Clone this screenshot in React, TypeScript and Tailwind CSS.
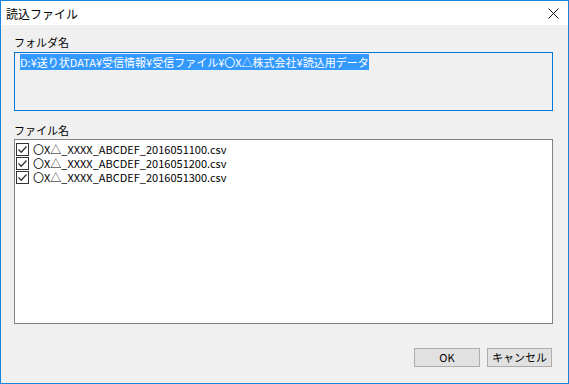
import React from 'react';

const files = [
  '〇X△_XXXX_ABCDEF_2016051100.csv',
  '〇X△_XXXX_ABCDEF_2016051200.csv',
  '〇X△_XXXX_ABCDEF_2016051300.csv',
];

const font = { fontFamily: '"Noto Sans CJK JP", "Noto Sans", sans-serif' };

const CheckBox = () => (
  <div className="w-[13px] h-[13px] border border-[#333333] bg-white flex items-center justify-center shrink-0">
    <svg width="11" height="11" viewBox="0 0 11 11">
      <path d="M1.5 5.5 L4.2 8.2 L9.5 2.5" stroke="#333333" strokeWidth="1.3" fill="none" />
    </svg>
  </div>
);

const App = () => {
  return (
    <div
      className="w-[569px] h-[384px] border border-[#1883d7] flex flex-col text-black text-[11px] leading-[13px]"
      style={font}
    >
      {/* title bar */}
      <div className="h-[24px] bg-white flex items-center justify-between pl-[5px] pr-[9px] shrink-0">
        <span className="text-[12px]">読込ファイル</span>
        <svg width="11" height="11" viewBox="0 0 11 11">
          <path d="M0.5 0.5 L10.5 10.5 M10.5 0.5 L0.5 10.5" stroke="#111" strokeWidth="1" />
        </svg>
      </div>

      <div className="flex-1 bg-[#f0f0f0] pl-[13px] pr-[15px] pt-[11px] flex flex-col">
        <div className="mb-[3px]">フォルダ名</div>
        <div className="h-[59px] border border-[#0078d7] bg-[#f0f0f0] pl-[5px] pt-[3px]">
          <span className="bg-[#3399ff] text-white">D:¥送り状DATA¥受信情報¥受信ファイル¥〇X△株式会社¥読込用データ</span>
        </div>

        <div className="mt-[13px] mb-[2px]">ファイル名</div>
        <div className="h-[185px] border border-[#828282] bg-white pl-[1px] pt-[2px]">
          {files.map((f, i) => (
            <div key={i} className="h-[14px] flex items-center gap-[4px]">
              <CheckBox />
              <span>{f}</span>
            </div>
          ))}
        </div>

        <div className="mt-[24px] flex justify-end gap-[7px] pr-[1px]">
          <button className="w-[66px] h-[19px] bg-[#e1e1e1] border border-[#adadad] text-[11px] leading-[13px]">
            OK
          </button>
          <button className="w-[65px] h-[19px] bg-[#e1e1e1] border border-[#adadad] text-[11px] leading-[13px]">
            キャンセル
          </button>
        </div>
      </div>
    </div>
  );
};

export default App;
